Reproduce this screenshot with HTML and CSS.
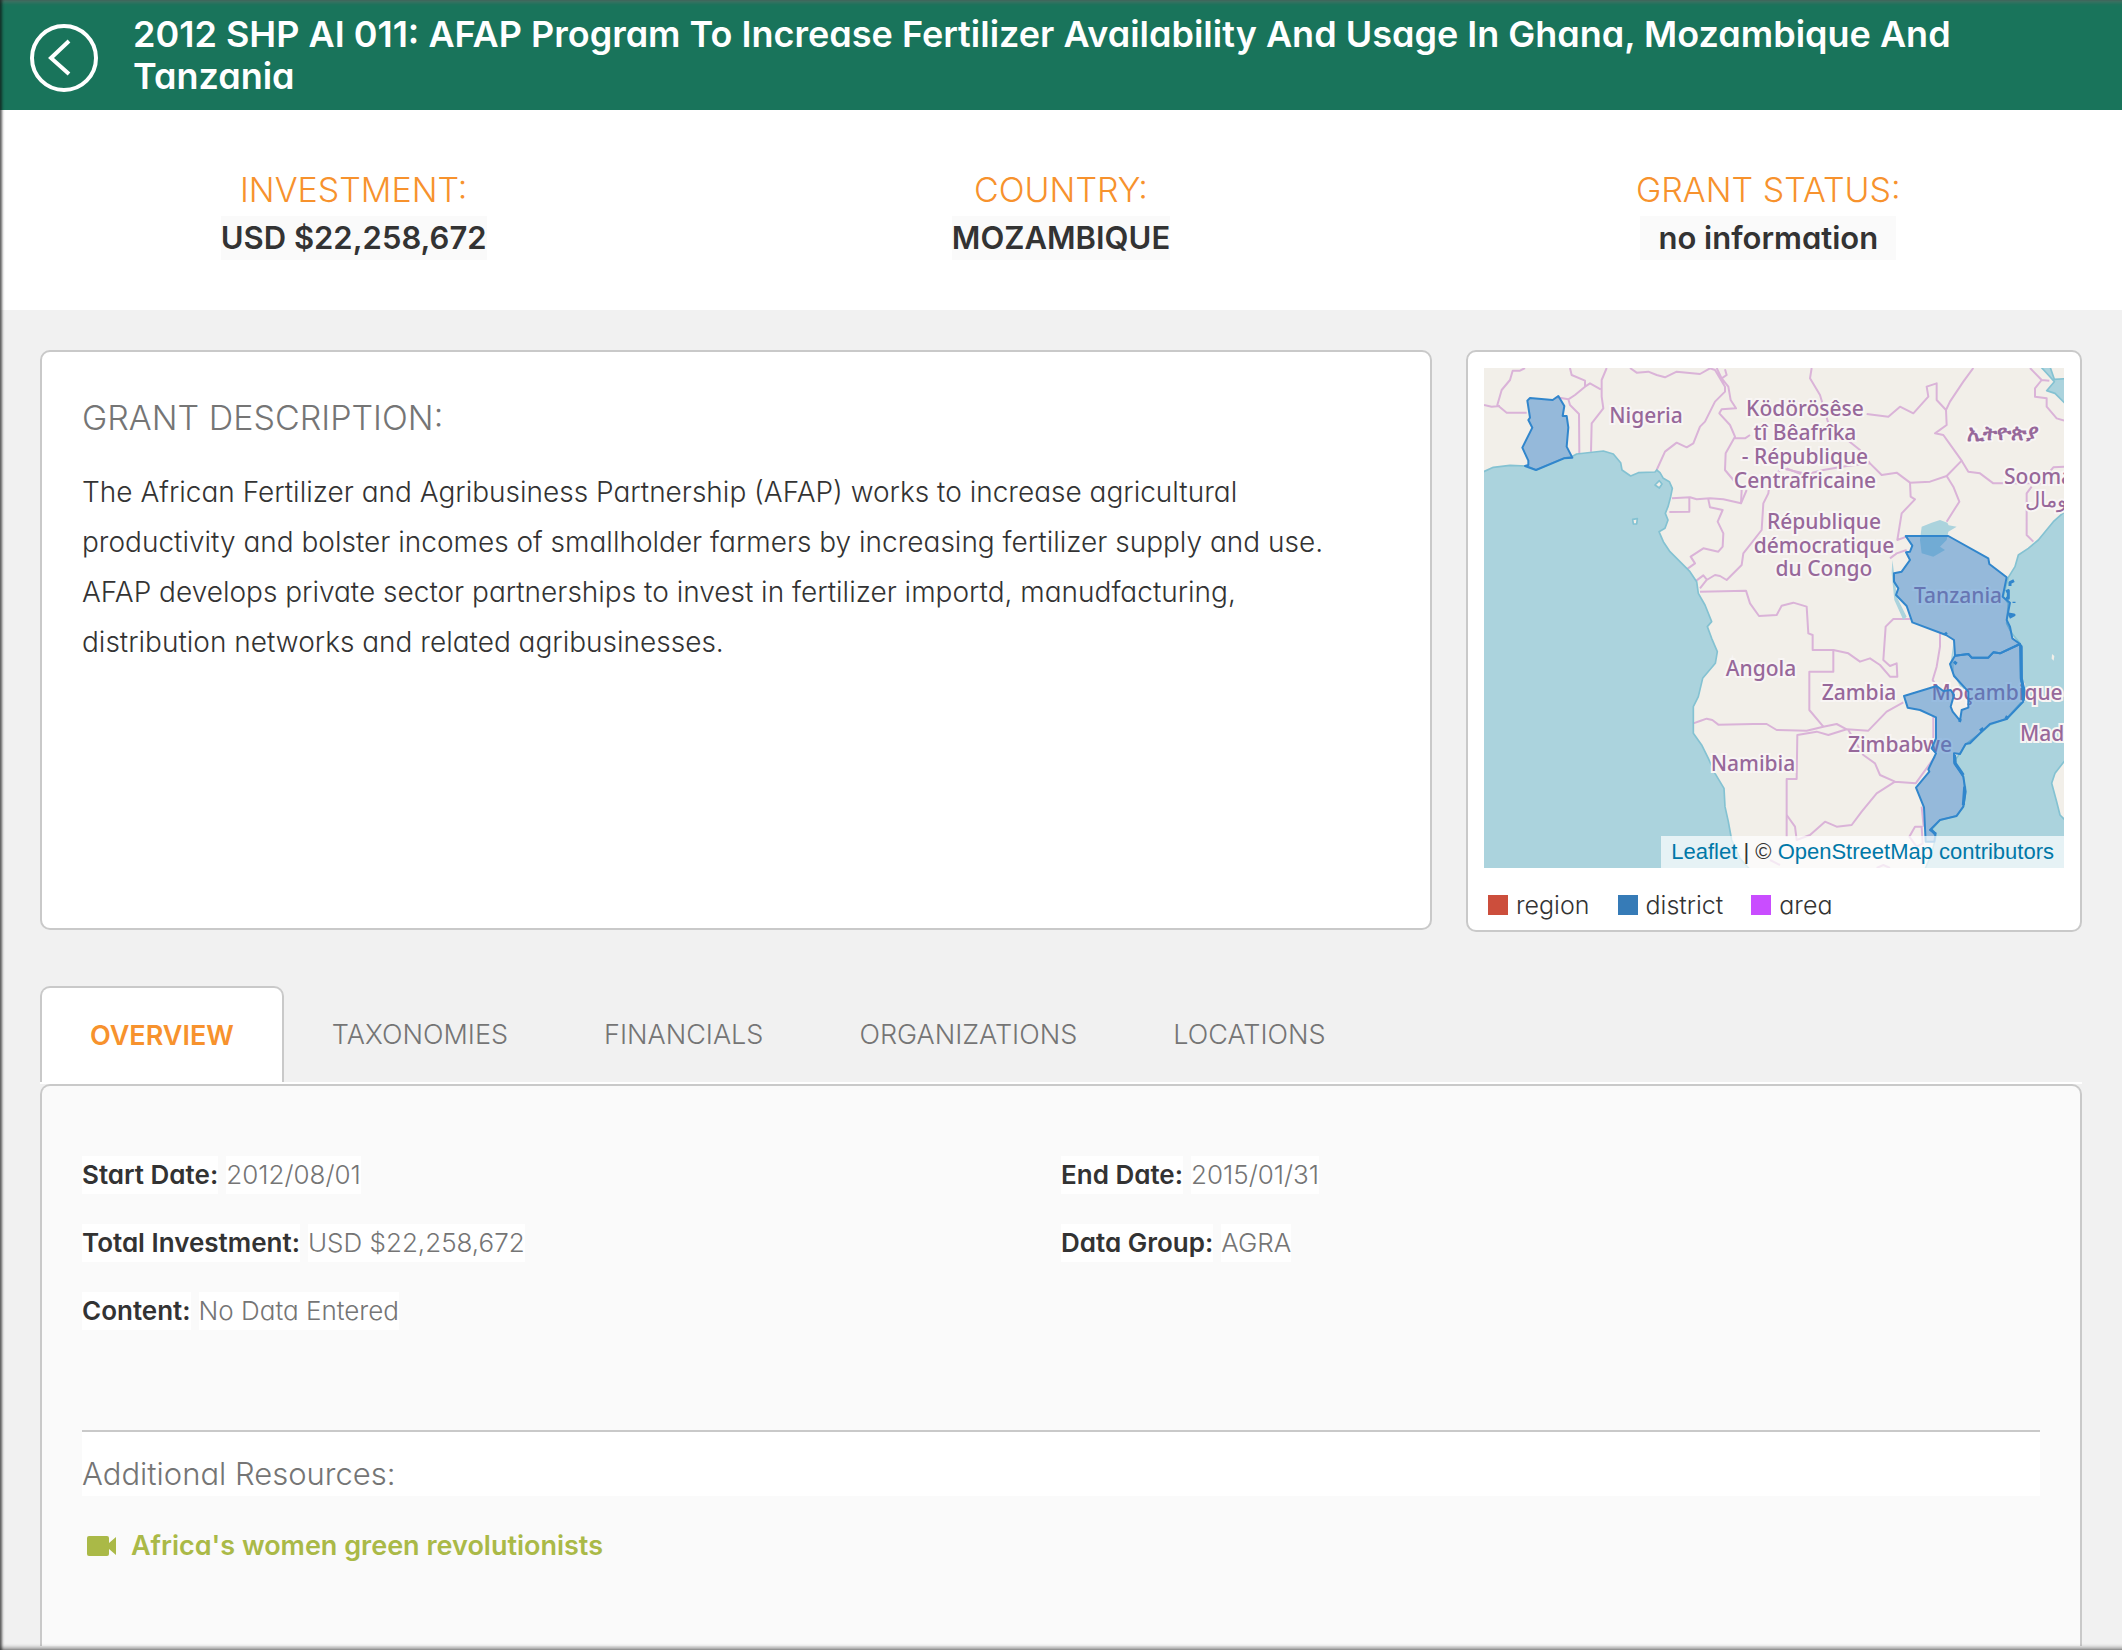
FILE: index.html
```html
<!DOCTYPE html>
<html lang="en">
<head>
<meta charset="utf-8">
<meta name="viewport" content="width=device-width, initial-scale=1">
<title>2012 SHP AI 011: AFAP Program</title>
<link rel="stylesheet" href="styles.css">
</head>
<body>
<header class="header">
  <button class="back" type="button" aria-label="Back">
    <svg viewBox="0 0 68 68" width="68" height="68" aria-hidden="true"><circle cx="34" cy="34" r="32"/><path d="M39 17 21 34l18 16"/></svg>
  </button>
  <h1 class="title">2012 SHP AI 011: AFAP Program To Increase Fertilizer Availability And Usage In Ghana, Mozambique And Tanzania</h1>
</header>

<section class="stats">
  <div class="stat"><h2 class="stat-label">INVESTMENT:</h2><span class="stat-value">USD $22,258,672</span></div>
  <div class="stat"><h2 class="stat-label">COUNTRY:</h2><span class="stat-value">MOZAMBIQUE</span></div>
  <div class="stat"><h2 class="stat-label">GRANT STATUS:</h2><span class="stat-value stat-value-wide">no information</span></div>
</section>

<main class="main">
  <div class="summary">
    <section class="card description">
      <h2 class="description-title">GRANT DESCRIPTION:</h2>
      <p class="description-text">The African Fertilizer and Agribusiness Partnership (AFAP) works to increase agricultural productivity and bolster incomes of smallholder farmers by increasing fertilizer supply and use. AFAP develops private sector partnerships to invest in fertilizer importd, manudfacturing, distribution networks and related agribusinesses.</p>
    </section>

    <section class="card map-card">
      <div class="map">
        <svg class="map-canvas" viewBox="0 0 580 500" role="img" aria-label="Map of Africa">
          <rect class="land" width="580" height="500"/>
          <g transform="scale(.33333) translate(-72 -84)">
            <g class="borders">
              <path d="M195 84 180 92 158 92 150 120 125 150 112 195 140 218 200 218M72 195 95 200 120 198M330 84 335 105 375 122 375 140 345 165 325 178 290 172M440 84 425 120 425 170 430 205 395 250 393 335M325 178 330 195 357 222 358 340M375 140 390 130 422 148"/>
              <path d="M510 84 530 98 565 95 590 105 615 112 650 95 720 102 750 85 765 90 795 140 795 155 765 185 735 245 720 260 700 310 680 322 650 308 615 335 590 390M770 84 785 115 800 105 795 88M785 115 805 140 812 180 828 205 785 208 778 220 810 255 825 290 797 340 795 390 845 450 843 490 790 478 750 475 710 478 690 472 636 475M825 295 855 295 870 285M688 475 688 515 628 516M745 478 750 502 788 510 773 545 790 580 788 620 775 635 730 625 692 650 705 670 680 688"/>
              <path d="M843 490 860 450M1040 402 965 385 930 420 925 460 910 490 905 570 850 640 845 675 800 720 780 708 765 705 740 720 720 745M705 725 730 706 740 718M720 755 858 752 870 790 897 828 950 825 965 797 1000 788 1040 800 1045 880 1058 885 1058 930 1120 930 1120 995 1048 995 1048 1110 1090 1160"/>
              <path d="M1120 930 1165 940 1200 965 1230 955 1260 975 1290 1010 1312 1010 1310 970 1290 978 1270 960 1277 860 1300 837 1350 837M700 1150 720 1143 740 1136 757 1140 775 1154 880 1152 920 1152 950 1170 1040 1172 1090 1160 1130 1152 1160 1168 1225 1172 1280 1115 1330 1087M980 1490 980 1317 1010 1317 1012 1185 1070 1175 1105 1185 1160 1168"/>
              <path d="M1165 1170 1210 1245 1245 1270 1260 1305 1305 1325 1367 1330 1425 1250M1305 1325 1250 1360 1205 1415 1175 1455 1130 1460 1095 1445 1050 1485 1010 1500 1005 1460 980 1425M1440 880 1440 920 1430 980 1418 1020 1430 1040M1420 1240 1420 1130M1391 1460 1385 1400M1365 1460 1348 1490 1370 1520 1388 1510 1385 1460ZM930 1560 960 1575M1250 1584 1270 1575 1290 1584"/>
              <path d="M1055 84 1050 115 1080 165 1105 250M1150 290 1200 330 1230 370 1265 405 1310 398 1350 428 1410 425 1460 408 1505 362 1475 320 1450 285 1425 280 1460 255 1458 210 1430 180 1430 130 1400 140 1405 170 1360 220 1320 200 1285 230 1220 222M1458 210 1470 185 1510 125 1540 84"/>
              <path d="M1505 362 1525 395 1560 400 1600 430 1740 430 1780 382 1812 380M1715 440 1700 460 1700 585 1720 605M1460 408 1480 440 1498 485 1460 545M1350 428 1352 470 1365 478 1325 520 1312 600 1340 590M1290 655 1310 640 1340 630M1710 84 1745 120 1725 145 1725 170 1760 175 1760 200 1790 235 1812 242M1745 120 1768 122M980 385 1030 405 1090 390 1160 378 1230 370"/>
            </g>
            <path class="sea" d="M60 400 100 382 150 376 200 378 228 390 310 355 335 350 350 342 430 333 460 342 482 368 486 390 512 408 535 398 585 396 590 390 600 398 610 415 628 425 637 445 632 470 624 500 616 520 624 540 615 565 597 575 610 605 630 635 660 665 690 695 710 725 715 760 735 795 755 845 742 860 755 895 772 935 766 970 728 1015 715 1070 700 1100 700 1180 725 1215 745 1255 765 1300 792 1345 795 1400 805 1445 815 1500 840 1555 880 1600 60 1600Z"/>
            <path class="sea" d="M1830 500 1780 545 1735 600 1705 625 1675 645 1665 680 1645 712 1630 770 1645 790 1640 850 1655 880 1680 910 1682 1020 1690 1080 1640 1135 1590 1155 1560 1180 1515 1215 1500 1240 1482 1265 1510 1310 1516 1360 1510 1400 1488 1428 1440 1440 1415 1470 1428 1490 1415 1540 1390 1600 1830 1600Z"/>
            <path class="sea" d="M1742 80 1765 105 1783 125 1760 152 1785 160 1830 205 1830 115 1783 118 1770 80Z"/>
            <path class="lake" d="M1385 560 1415 548 1440 540 1462 548 1466 556 1490 560 1465 575 1460 600 1440 620 1455 630 1420 650 1385 640 1380 600ZM1297 660 1304 710 1310 770 1340 830 1330 840 1303 780 1295 700ZM1480 910 1470 980 1500 1040 1524 1060 1482 1000Z"/>
            <path class="land coast" d="M1830 1250 1812 1265 1785 1300 1775 1330 1790 1385 1800 1425 1830 1455ZM585 435 598 422 606 432 598 444ZM518 538 532 536 530 552 520 552Z"/>
            <path class="land" d="M1776 942 1783 948 1781 962 1775 956Z"/>
          </g>
          <g class="labels">
            <text x="162" y="55">Nigeria</text>
            <text x="321" y="48">Ködörösêse</text>
            <text x="321" y="72">tî Bêafrîka</text>
            <text x="321" y="96">- République</text>
            <text x="321" y="120">Centrafricaine</text>
            <text class="label-ethiopic" x="519" y="72">ኢትዮጵያ</text>
            <text class="label-start" x="520" y="116">Soomaaliya</text>
            <text class="label-start" x="541" y="139">الصومال</text>
            <text x="340" y="161">République</text>
            <text x="340" y="185">démocratique</text>
            <text x="340" y="208">du Congo</text>
            <text x="474" y="235">Tanzania</text>
            <text x="277" y="308">Angola</text>
            <text x="375" y="332">Zambia</text>
            <text x="513" y="332">Moçambique</text>
            <text x="416" y="384">Zimbabwe</text>
            <text class="label-start" x="536" y="373">Madagasikara</text>
            <text x="269" y="403">Namibia</text>
          </g>
          <g class="districts" transform="scale(.33333) translate(-72 -84)">
            <path d="M202 182 210 174 278 180 295 168 313 198 308 228 320 228 325 262 320 320 337 353 312 355 228 390 195 378 205 375 205 362 187 323 217 263 205 240 210 233Z"/>
            <path d="M1337 588 1465 588 1585 655 1588 672 1640 712 1628 770 1650 788 1640 840 1650 860 1657 895 1680 912 1620 940 1600 937 1585 953 1535 953 1525 942 1485 947 1482 900 1458 885 1357 847 1340 798 1308 765 1315 745 1302 725 1302 700 1325 695 1350 660 1338 637 1350 635 1357 617Z"/>
            <path d="M1485 947 1525 942 1535 953 1585 953 1600 937 1620 940 1680 912 1685 920 1685 1020 1690 1085 1640 1137 1590 1152 1560 1180 1530 1210 1517 1212 1500 1242 1482 1240 1483 1270 1500 1295 1510 1310 1517 1355 1510 1400 1490 1428 1440 1440 1410 1470 1427 1480 1423 1505 1397 1505 1392 1402 1368 1343 1408 1295 1405 1288 1428 1240 1415 1225 1428 1195 1428 1132 1380 1110 1343 1103 1332 1068 1430 1038 1450 1053 1472 1050 1482 1065 1472 1100 1478 1115 1500 1142 1505 1110 1525 1103 1525 1055 1482 1008 1470 972Z"/>
            <path class="islets" d="M1650 738 1650 728 1662 722M1638 755 1645 752 1645 775 1638 775M1662 785v4M1645 822 1662 825 1648 832M1682 915 1684 1015 1692 1050 1690 1082M1636 1130 1645 1135M1560 1172 1570 1165M1496 1140 1504 1143M1484 1245 1486 1270 1500 1290 1510 1305M1514 1340 1510 1395M1412 1468 1426 1482M1482 965 1490 972M1455 878 1460 884"/>
          </g>
        </svg>
        <div class="attribution"><a href="#leaflet">Leaflet</a> | © <a href="#osm">OpenStreetMap contributors</a></div>
      </div>
      <ul class="legend">
        <li><span class="swatch swatch-region"></span>region</li>
        <li><span class="swatch swatch-district"></span>district</li>
        <li><span class="swatch swatch-area"></span>area</li>
      </ul>
    </section>
  </div>

  <div class="tabs" role="tablist">
    <button class="tab tab-active" type="button" role="tab" aria-selected="true">OVERVIEW</button>
    <button class="tab" type="button" role="tab" aria-selected="false">TAXONOMIES</button>
    <button class="tab" type="button" role="tab" aria-selected="false">FINANCIALS</button>
    <button class="tab" type="button" role="tab" aria-selected="false">ORGANIZATIONS</button>
    <button class="tab" type="button" role="tab" aria-selected="false">LOCATIONS</button>
  </div>

  <section class="panel" role="tabpanel">
    <dl class="facts">
      <div class="fact"><dt>Start Date:</dt><dd>2012/08/01</dd></div>
      <div class="fact"><dt>End Date:</dt><dd>2015/01/31</dd></div>
      <div class="fact"><dt>Total Investment:</dt><dd>USD $22,258,672</dd></div>
      <div class="fact"><dt>Data Group:</dt><dd>AGRA</dd></div>
      <div class="fact"><dt>Content:</dt><dd>No Data Entered</dd></div>
    </dl>
    <h3 class="resources-title">Additional Resources:</h3>
    <a class="resource" href="#video">
      <svg viewBox="0 0 30 20" width="30" height="20" aria-hidden="true"><path d="M2 0h18q2 0 2 2v5l7-6v18l-7-6v5q0 2-2 2H2q-2 0-2-2V2q0-2 2-2z"/></svg>
      Africa's women green revolutionists
    </a>
  </section>
</main>
</body>
</html>
```
FILE: styles.css
```css
* { box-sizing: border-box; }

body {
  margin: 0;
  min-height: 100vh;
  display: flex;
  flex-direction: column;
  background: #f1f1f1;
  color: #333;
  font-family: Inter, "Open Sans", sans-serif;
  font-feature-settings: "cv11";
  font-weight: 300;
}

/* thin shade along the window frame, left open on the right */
body::after {
  content: "";
  position: fixed;
  inset: 0 -10px 0 0;
  pointer-events: none;
  box-shadow: inset 3px 0 3px -1px rgba(0, 0, 0, .55), inset 0 3px 4px -1px rgba(110, 110, 110, .7), inset 0 -3px 4px -1px rgba(0, 0, 0, .45);
}

h1, h2, h3, p, dl, dd, ul { margin: 0; padding: 0; }
button { font: inherit; font-feature-settings: inherit; border: 0; padding: 0; background: none; cursor: pointer; }

.header {
  display: flex;
  align-items: flex-start;
  gap: 35px;
  min-height: 110px;
  padding: 13px 30px;
  background: #19745b;
  color: #fff;
}
.back { flex: none; margin-top: 11px; width: 68px; height: 68px; }
.back svg { display: block; fill: none; stroke: #fff; stroke-width: 4; }
.title { font-size: 36px; line-height: 42px; font-weight: 600; }

.stats {
  display: grid;
  grid-template-columns: repeat(3, 1fr);
  min-height: 200px;
  padding: 58px 0 50px;
  background: #fff;
  text-align: center;
}
.stat-label { font-size: 34px; line-height: 44px; margin-bottom: 4px; font-weight: 300; color: #f7922d; }
.stat-value { display: inline-block; font-size: 31px; line-height: 44px; font-weight: 600; background: #fafafa; }
.stat-value-wide { padding: 0 18px; }

.main { flex: 1; display: flex; flex-direction: column; padding: 40px 40px 4px; }
.summary { display: grid; grid-template-columns: minmax(0, 1fr) 616px; gap: 34px; align-items: start; }
.card { background: #fff; border: 2px solid #c9c9c9; border-radius: 10px; }

.description { min-height: 580px; padding: 42px 80px 42px 40px; }
.description-title { font-size: 34px; line-height: 48px; margin-bottom: 25px; font-weight: 300; color: #757575; }
.description-text { font-size: 28px; line-height: 50px; }

.map-card { padding: 16px 16px 8px; }
.map { position: relative; }
.map-canvas { display: block; width: 100%; height: auto; }
.land { fill: #f2efe9; }
.sea, .coast { stroke: #84c2d2; stroke-width: 5; stroke-linejoin: round; }
.sea, .lake { fill: #abd3dd; }
.borders { fill: none; stroke: #dab3d8; stroke-width: 6; stroke-linejoin: round; }
.labels { font: 500 21px "Noto Sans", "Open Sans", sans-serif; fill: #97689a; stroke: #f8f5f4; stroke-width: 4px; paint-order: stroke; text-anchor: middle; }
.label-start { text-anchor: start; }
.label-ethiopic { font-weight: 700; }
.districts { fill: rgba(56, 131, 203, .5); stroke: #3186cc; stroke-width: 6; stroke-linejoin: round; }
.islets { fill: none; stroke-width: 9; }
.attribution {
  position: absolute;
  right: 0;
  bottom: 0;
  padding: 0 10px;
  background: rgba(255, 255, 255, .7);
  font: 22px/32px "Liberation Sans", Arial, sans-serif;
}
.attribution a { color: #0078a8; text-decoration: none; }
.legend { display: flex; gap: 28px; margin-top: 20px; padding-left: 4px; list-style: none; font-size: 25px; line-height: 34px; }
.legend li { display: flex; align-items: center; gap: 8px; }
.swatch { width: 20px; height: 20px; }
.swatch-region { background: #cc4e3c; }
.swatch-district { background: #367bb7; }
.swatch-area { background: #c94dff; }

.tabs { display: flex; margin-top: 54px; border-bottom: 2px solid #fff; }
.tab { height: 96px; padding: 0 48px; font-size: 27px; color: #757575; }
.tab-active { border: 2px solid #c9c9c9; border-bottom: 0; border-radius: 10px 10px 0 0; background: #fff; color: #f7922d; font-weight: 600; }

.panel { flex: 1; padding: 70px 40px 40px; border: 2px solid #c9c9c9; border-bottom: 0; border-radius: 10px 10px 0 0; background: #fafafa; }
.facts { display: grid; grid-template-columns: 1fr 1fr; row-gap: 30px; font-size: 26px; line-height: 38px; }
.fact { display: flex; gap: 8px; }
.fact dt, .fact dd { background: #fff; }
.fact dt { font-weight: 600; }
.fact dd { color: #757575; }
.resources-title { margin-top: 100px; padding: 22px 0 2px; border-top: 2px solid #c9c9c9; background: #fff; font-size: 31px; line-height: 40px; font-weight: 300; color: #757575; }
.resource { display: inline-flex; align-items: center; gap: 14px; margin: 30px 0 0 5px; font-size: 27px; line-height: 40px; font-weight: 600; color: #aab947; text-decoration: none; }
.resource svg { fill: currentColor; }
```
